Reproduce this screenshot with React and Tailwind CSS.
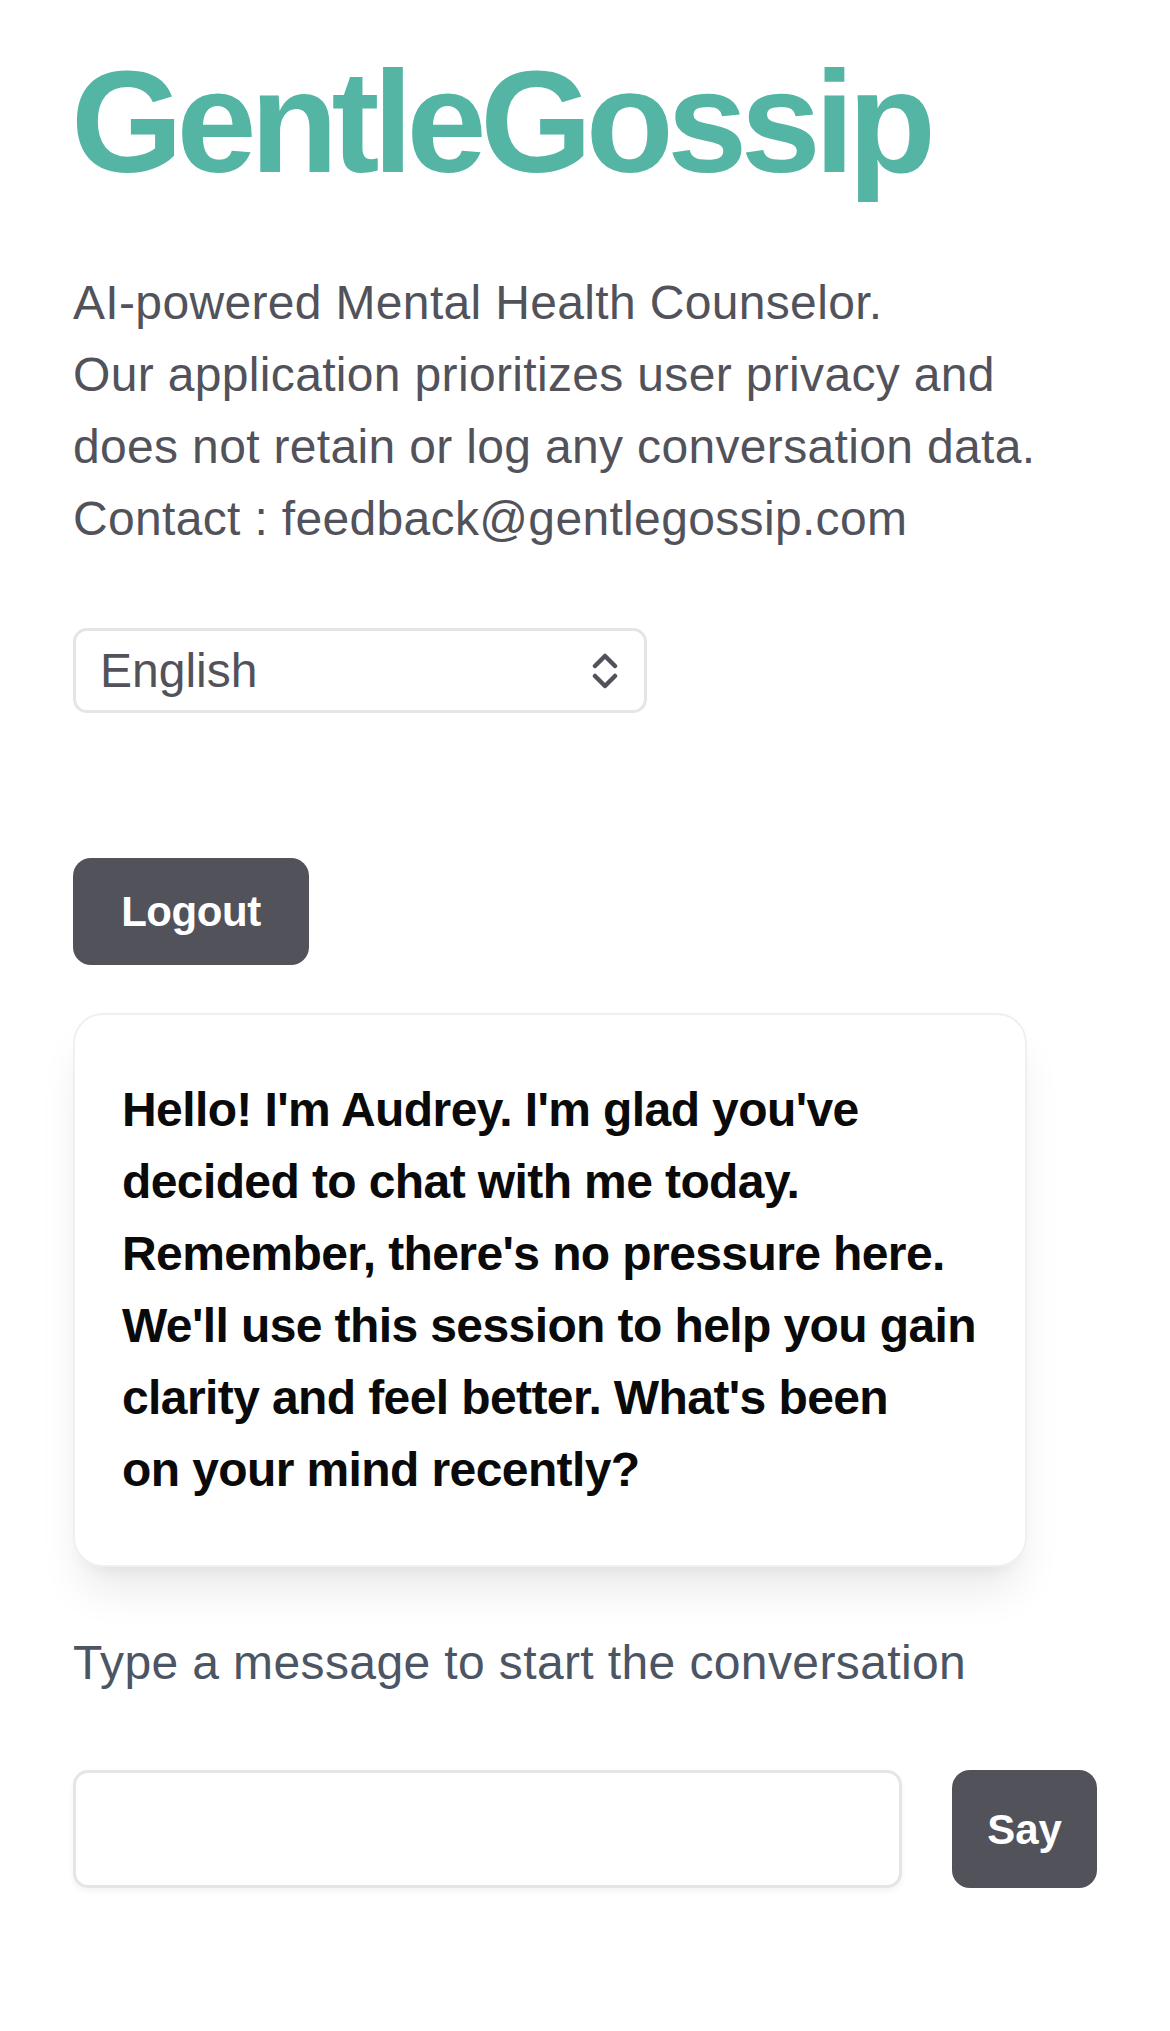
import React from 'react';

const font = { fontFamily: '"Liberation Sans", Arial, sans-serif' };

function UpDownIcon() {
    return (
        <svg width="26" height="36" viewBox="0 0 26 36" fill="none" stroke="#52525b" strokeWidth="4.5" strokeLinecap="round" strokeLinejoin="round">
            <polyline points="3,13 13,3 23,13" />
            <polyline points="3,23 13,33 23,23" />
        </svg>
    );
}

export default function App() {
    const lines = [
        "Hello! I'm Audrey. I'm glad you've",
        'decided to chat with me today.',
        "Remember, there's no pressure here.",
        "We'll use this session to help you gain",
        "clarity and feel better. What's been",
        'on your mind recently?',
    ];

    return (
        <div className="min-h-screen bg-white px-[73px] pt-[51px] pb-[140px]" style={font}>
            <h1 className="text-[144px] leading-none font-bold tracking-[-0.045em] text-[#55b5a5] -ml-[2px]">
                GentleGossip
            </h1>

            <p className="mt-[72px] text-[48px] leading-[72px] text-[#52525b] tracking-[0.007em]">
                AI-powered Mental Health Counselor.
                <br />
                Our application prioritizes user privacy and
                <br />
                does not retain or log any conversation data.
                <br />
                Contact : feedback@gentlegossip.com
            </p>

            <div className="mt-[73px] w-[574px] h-[85px] flex items-center justify-between rounded-[14px] border-[3px] border-[#e5e5e7] bg-white pl-[24px] pr-[26px]">
                <span className="text-[48px] leading-none text-[#52525b]">English</span>
                <UpDownIcon />
            </div>

            <button className="mt-[145px] block w-[236px] h-[107px] rounded-[18px] bg-[#52525b] text-white text-[42px] font-bold tracking-[-0.01em]">
                Logout
            </button>

            <div className="mt-[48px] w-[954px] rounded-[30px] border-2 border-[#f0f0f2] bg-white px-[47px] py-[59px] shadow-[0_30px_45px_-9px_rgba(0,0,0,0.09),0_12px_18px_-12px_rgba(0,0,0,0.08)]">
                {lines.map((l) => (
                    <div key={l} className="text-[48px] leading-[72px] font-bold text-[#0a0a0a] tracking-[-0.0125em] whitespace-nowrap">
                        {l}
                    </div>
                ))}
            </div>

            <p className="mt-[60px] text-[48px] leading-[72px] text-[#4b5563] tracking-[0.008em]">
                Type a message to start the conversation
            </p>

            <div className="mt-[71px] flex gap-[50px]">
                <input
                    type="text"
                    className="w-[829px] h-[118px] rounded-[15px] border-[3px] border-[#e5e5e7] bg-white px-6 text-[48px] outline-none shadow-[0_3px_6px_rgba(0,0,0,0.05)]"
                />
                <button className="w-[145px] h-[118px] rounded-[18px] bg-[#52525b] text-white text-[42px] font-bold">
                    Say
                </button>
            </div>
        </div>
    );
}
